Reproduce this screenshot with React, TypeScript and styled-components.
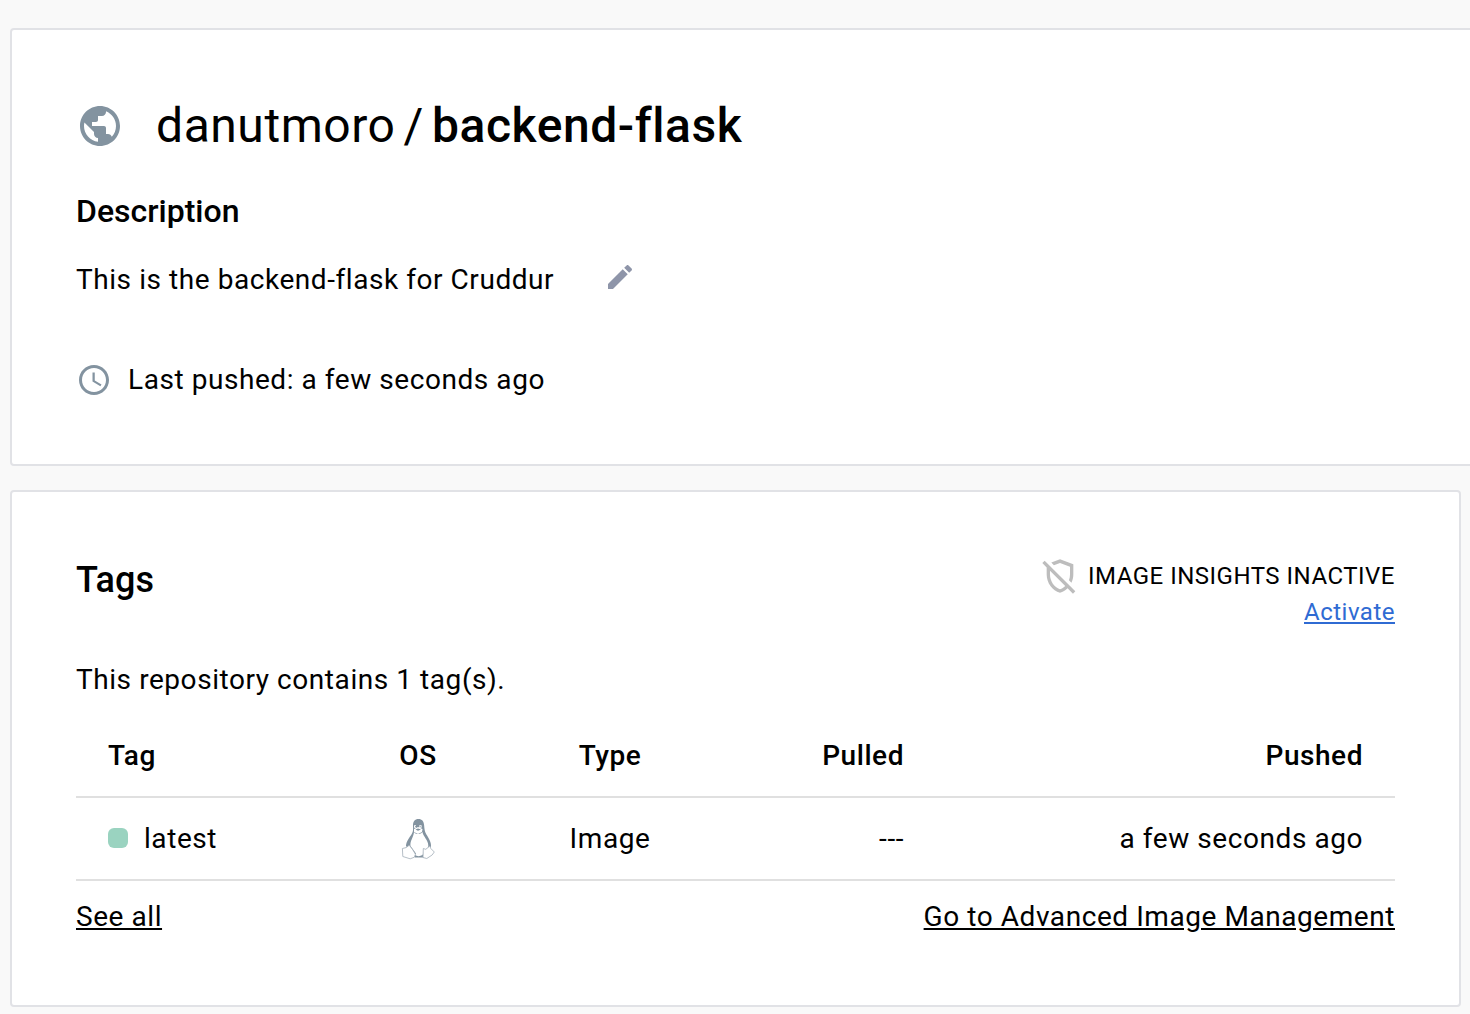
import React from "react";
import styled, { createGlobalStyle } from "styled-components";

const GlobalStyle = createGlobalStyle`
  * { box-sizing: border-box; }
  html, body { margin: 0; padding: 0; overflow: hidden; background: #f9f9f9; }
  body {
    font-family: Roboto, "Liberation Sans", sans-serif;
    font-size: 28px;
    line-height: 40px;
    letter-spacing: 0.56px;
    color: #000;
  }
`;

const Page = styled.main`
  height: 1014px;
  overflow: hidden;
  padding: 28px 9px 0 10px;
  display: flex;
  flex-direction: column;
  gap: 24px;
  background: #f9f9f9;
`;

const Card = styled.section<{ $height: number; $bleed?: boolean }>`
  flex: none;
  height: ${(p) => p.$height}px;
  margin-right: ${(p) => (p.$bleed ? "-24px" : "0")};
  padding: 64px;
  border: 2px solid #e1e2e6;
  border-radius: 4px;
  background: #fff;
`;

const RepoHeader = styled.header`
  display: flex;
  align-items: center;
  height: 64px;
  gap: 32px;
`;

const RepoTitle = styled.h1`
  display: flex;
  gap: 8px;
  margin: 0;
  font-size: 48px;
  line-height: 64px;
  font-weight: 400;
  white-space: nowrap;
`;

const RepoName = styled.span`
  font-weight: 500;
`;

const Heading = styled.h2<{ $size: number }>`
  margin: 0;
  font-size: ${(p) => p.$size}px;
  line-height: 48px;
  font-weight: 500;
  letter-spacing: 0;
`;

const DescriptionHeading = styled(Heading)`
  margin-top: 29px;
`;

const IconLine = styled.div<{ $top: number; $gap: number }>`
  display: flex;
  align-items: center;
  gap: ${(p) => p.$gap}px;
  height: 40px;
  margin-top: ${(p) => p.$top}px;
  white-space: nowrap;
`;

const Icon = styled.svg<{ $size: number; $color?: string }>`
  display: block;
  flex: none;
  width: ${(p) => p.$size}px;
  height: ${(p) => p.$size}px;
  fill: ${(p) => p.$color ?? "#8393a0"};
`;

const EditIcon = styled(Icon)`
  margin-bottom: 6px;
`;

const TagsHeader = styled.header`
  display: flex;
  justify-content: space-between;
  align-items: flex-start;
  height: 76px;
`;

const Insights = styled.div`
  display: flex;
  flex-direction: column;
  align-items: flex-end;
  padding-top: 2px;
  font-size: 24px;
  line-height: 36px;
  letter-spacing: 0.5px;
`;

const InsightsStatus = styled.div`
  display: flex;
  align-items: center;
  gap: 8px;
  height: 36px;
`;

const Link = styled.a<{ $color?: string }>`
  color: ${(p) => p.$color ?? "#000"};
  text-decoration: underline;
  cursor: pointer;
`;

const Summary = styled.p`
  margin: 28px 0 0;
`;

const Table = styled.div`
  margin-top: 14px;
`;

const Row = styled.div<{ $head?: boolean }>`
  display: grid;
  grid-template-columns: 251px 118px 266px 161px 1fr;
  align-items: center;
  height: ${(p) => (p.$head ? 84 : 83)}px;
  padding: ${(p) => (p.$head ? "2px 32px 0" : "0 32px")};
  border-bottom: 2px solid #e0e0e0;
  font-weight: ${(p) => (p.$head ? 500 : 400)};
`;

const Cell = styled.div<{ $align?: string }>`
  display: flex;
  align-items: center;
  justify-content: ${(p) => p.$align ?? "flex-start"};
  white-space: nowrap;
`;

const Status = styled.span`
  width: 20px;
  height: 20px;
  margin: 0 16px 1px 0;
  border-radius: 6px;
  background: #9ad3c0;
`;

const Penguin = styled.svg`
  display: block;
  width: 36px;
  height: 44px;
`;

const CardFooter = styled.footer`
  display: flex;
  justify-content: space-between;
  margin-top: 16px;
`;

const PublicIcon = () => (
  <Icon $size={48} viewBox="0 0 24 24">
    <path d="M12 2C6.48 2 2 6.48 2 12s4.480 10 10 10 10-4.480 10-10S17.520 2 12 2zm-1 17.930c-3.950-.49-7-3.850-7-7.930 0-.62.08-1.210.21-1.790L9 15v1c0 1.100.9 2 2 2v1.930zm6.900-2.540c-.26-.81-1-1.390-1.900-1.390h-1v-3c0-.55-.45-1-1-1H8v-2h2c.55 0 1-.45 1-1V7h2c1.100 0 2-.9 2-2v-.41c2.930 1.190 5 4.060 5 7.410 0 2.080-.8 3.970-2.100 5.390z" />
  </Icon>
);

const PencilIcon = () => (
  <EditIcon $size={32} $color="#8e95a9" viewBox="0 0 24 24">
    <path d="M3 17.250V21h3.750L17.810 9.940l-3.750-3.750L3 17.250zM20.710 7.040c.39-.39.39-1.020 0-1.410l-2.340-2.340c-.39-.39-1.020-.39-1.410 0l-1.830 1.830 3.750 3.750 1.830-1.830z" />
  </EditIcon>
);

const ClockIcon = () => (
  <Icon $size={36} viewBox="0 0 24 24">
    <path d="M11.990 2C6.470 2 2 6.480 2 12s4.470 10 9.990 10C17.520 22 22 17.520 22 12S17.520 2 11.990 2zM12 20c-4.420 0-8-3.580-8-8s3.580-8 8-8 8 3.580 8 8-3.580 8-8 8z" />
    <path d="M12.500 7H11v6l5.250 3.150.75-1.230-4.500-2.670z" />
  </Icon>
);

const ShieldOffIcon = () => (
  <Icon $size={40} $color="#bdbdbd" viewBox="0 0 24 24">
    <path d="M12 4.140l6 2.250v4.700c0 1.190-.23 2.360-.64 3.440l1.510 1.510c.72-1.530 1.130-3.220 1.130-4.950V5l-8-3-5.220 1.960 1.550 1.550L12 4.140zM2.810 2.810 1.390 4.220 4 6.830v4.260c0 5.050 3.410 9.760 8 10.910 1.720-.43 3.280-1.360 4.550-2.620l3.230 3.230 1.410-1.410L2.810 2.810zM12 19.920c-3.450-1.130-6-4.820-6-8.830v-2.260l9.140 9.140c-.9.9-1.970 1.580-3.140 1.950z" />
  </Icon>
);

const LinuxIcon = () => (
  <Penguin viewBox="0 0 36 44">
    <path
      fill="#8393a0"
      d="M18.500 2c-3.800 0-5.500 2.600-5.500 6.200 0 3.600.6 5.800-1.400 9C9.500 20.500 6 24.500 6 29l4 5 5 6.500h9l3-6 4-5c.4-4.500-2.400-8.500-4.600-12-1.800-3-2-6-2.300-9.500C23.800 4.300 22 2 18.500 2z"
    />
    <path
      fill="#fff"
      d="M14 15c1.500 2.800 6.500 2.800 8.500 0 .6 4.500 5.800 8 5.800 13.500 0 3-1.500 4-3.300 4l-2.500 5.500c-2.500 1.500-5.500 1.500-7.500 0l1-1.500-5.500-7.500c-.8-5 3-8.500 3.500-14z"
    />
    <path fill="#fff" d="M14 12l4-2 4.500 2-.5 3-4 2-4-2zM14 8.300h2v2.400h-2zM19.300 8.300h2.300v2.400h-2.300z" />
    <path fill="#8393a0" d="M15.500 12.500l2.500-1 3 1-3 1.200zM15.200 9h.8v1h-.8zM19.800 9h.8v1h-.8z" />
    <path
      fill="#fff"
      stroke="#a3afb9"
      strokeWidth="0.8"
      d="M2.400 31.500l4-1 2.800-2.300 3.200 4 3 5-1 3-4.200 1.600-7.400-2.300zM23.300 31.500l2.500.8 4-3.300 1 2.500 3.500 3.500-2.200 3-5.300 3.500-3.800-1z"
    />
  </Penguin>
);

export default function App() {
  return (
    <>
      <GlobalStyle />
      <Page>
        <Card $height={438} $bleed>
          <RepoHeader>
            <PublicIcon />
            <RepoTitle>
              <span>danutmoro</span>
              <span>/</span>
              <RepoName>backend-flask</RepoName>
            </RepoTitle>
          </RepoHeader>
          <DescriptionHeading $size={32}>Description</DescriptionHeading>
          <IconLine $top={25} $gap={50}>
            <span>This is the backend-flask for Cruddur</span>
            <PencilIcon />
          </IconLine>
          <IconLine $top={60} $gap={16}>
            <ClockIcon />
            <span>Last pushed: a few seconds ago</span>
          </IconLine>
        </Card>
        <Card $height={517}>
          <TagsHeader>
            <Heading $size={36}>Tags</Heading>
            <Insights>
              <InsightsStatus>
                <ShieldOffIcon />
                <span>IMAGE INSIGHTS INACTIVE</span>
              </InsightsStatus>
              <Link $color="#2f6bd3">Activate</Link>
            </Insights>
          </TagsHeader>
          <Summary>This repository contains 1 tag(s).</Summary>
          <Table>
            <Row $head>
              <Cell>Tag</Cell>
              <Cell $align="center">OS</Cell>
              <Cell $align="center">Type</Cell>
              <Cell $align="flex-end">Pulled</Cell>
              <Cell $align="flex-end">Pushed</Cell>
            </Row>
            <Row>
              <Cell>
                <Status />
                latest
              </Cell>
              <Cell $align="center">
                <LinuxIcon />
              </Cell>
              <Cell $align="center">Image</Cell>
              <Cell $align="flex-end">---</Cell>
              <Cell $align="flex-end">a few seconds ago</Cell>
            </Row>
          </Table>
          <CardFooter>
            <Link>See all</Link>
            <Link>Go to Advanced Image Management</Link>
          </CardFooter>
        </Card>
      </Page>
    </>
  );
}
